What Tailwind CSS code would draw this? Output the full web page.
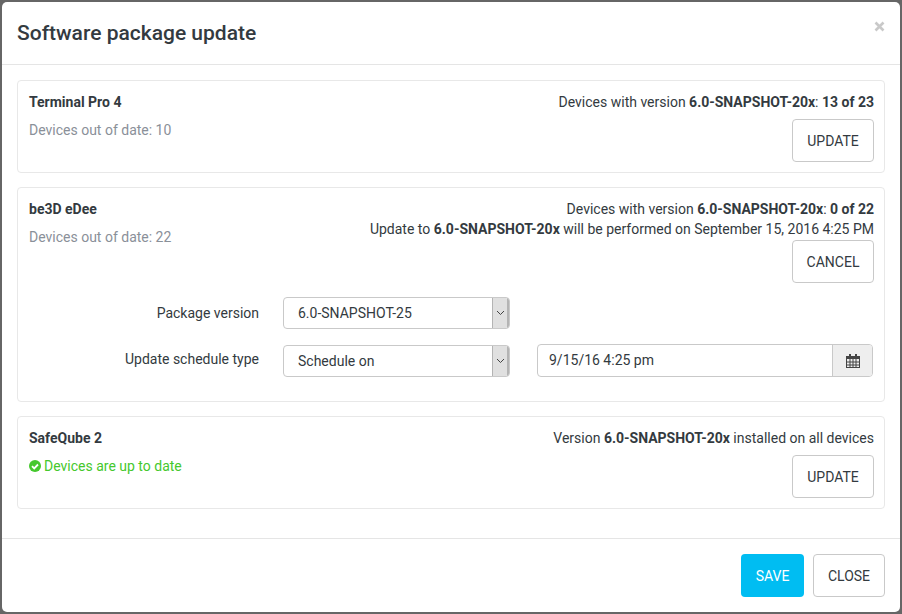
<!DOCTYPE html>
<html lang="en">
<head>
  <meta charset="UTF-8" />
  <title>Software package update</title>
  <script src="https://cdn.jsdelivr.net/npm/@tailwindcss/browser@4"></script>
</head>
<body class="w-[902px] h-[614px] overflow-hidden bg-[#666666] font-['Roboto',sans-serif] text-[14px] leading-[20px] text-[#333a40]">

  <!-- Modal -->
  <div class="relative ml-[2px] mt-[2px] w-[898px] h-[610px] bg-white rounded-[5px] flex flex-col">

    <!-- Header -->
    <div class="h-[62px] shrink-0 border-b border-[#e5e5e5] pl-[15px] pr-[15px] flex justify-between box-content">
      <h4 class="text-[21px] leading-[28px] font-medium mt-[17px]">Software package update</h4>
      <svg class="mt-[19px]" width="11" height="11" viewBox="0 0 11 11"><path d="M1.500 1.500l8 8M9.500 1.500l-8 8" stroke="#c9c9c9" stroke-width="2.600"/></svg>
    </div>

    <!-- Body -->
    <div class="flex-1 pl-[15px] pr-[15px] pt-[15px] flex flex-col gap-[14px]">

      <div class="h-[93px] border border-[#e8e8e8] rounded-[4px] pl-[11px] pr-[10px] pt-[11px] flex justify-between">
        <div>
          <div class="font-bold">Terminal Pro 4</div>
          <div class="mt-[8px] text-[#8a9099]">Devices out of date: 10</div>
        </div>
        <div class="flex flex-col items-end">
          <div>Devices with version <b>6.0-SNAPSHOT-20x</b>: <b>13 of 23</b></div>
          <button class="mt-[7px] w-[82px] h-[43px] border border-[#c9c9c9] rounded-[4px] bg-white">UPDATE</button>
        </div>
      </div>

      <div class="h-[215px] border border-[#e8e8e8] rounded-[4px] pl-[11px] pr-[10px] pt-[11px]">
        <div class="flex justify-between">
          <div>
            <div class="font-bold">be3D eDee</div>
            <div class="mt-[8px] text-[#8a9099]">Devices out of date: 22</div>
          </div>
          <div class="flex flex-col items-end">
            <div>Devices with version <b>6.0-SNAPSHOT-20x</b>: <b>0 of 22</b></div>
            <div>Update to <b>6.0-SNAPSHOT-20x</b> will be performed on September 15, 2016 4:25 PM</div>
            <button class="mt-[1px] w-[82px] h-[43px] border border-[#c9c9c9] rounded-[4px] bg-white">CANCEL</button>
          </div>
        </div>

        <div class="mt-[14px] flex items-center">
          <div class="w-[230px] text-right">Package version</div>
          <div class="ml-[24px] w-[227px] h-[32px] border border-[#c9c9c9] rounded-[4px] flex justify-between overflow-hidden">
            <span class="pl-[14px] pt-[5px]">6.0-SNAPSHOT-25</span>
            <span class="w-[17px] bg-[#e0e0e0] border-l border-r-2 border-[#b4b4b4] flex items-center justify-center">
              <svg width="9" height="6" viewBox="0 0 9 6"><path d="M1 1l3.500 3.500L8 1" fill="none" stroke="#444" stroke-width="1"/></svg>
            </span>
          </div>
        </div>

        <div class="mt-[15px] flex items-center">
          <div class="w-[230px] text-right mb-[3px]">Update schedule type</div>
          <div class="ml-[24px] w-[227px] h-[32px] border border-[#c9c9c9] rounded-[4px] flex justify-between overflow-hidden">
            <span class="pl-[14px] pt-[5px]">Schedule on</span>
            <span class="w-[17px] bg-[#e0e0e0] border-l border-r-2 border-[#b4b4b4] flex items-center justify-center">
              <svg width="9" height="6" viewBox="0 0 9 6"><path d="M1 1l3.500 3.500L8 1" fill="none" stroke="#444" stroke-width="1"/></svg>
            </span>
          </div>
          <div class="ml-[27px] w-[336px] h-[33px] border border-[#c9c9c9] rounded-[4px] flex justify-between overflow-hidden">
            <span class="pl-[11px] pt-[5px]">9/15/16 4:25 pm</span>
            <span class="w-[40px] bg-[#eeeeee] border-l border-[#c9c9c9] flex items-center justify-center">
              <svg width="14" height="14" viewBox="0 0 14 14" fill="#444"><path d="M3 0h2v2h4V0h2v2h3v12H0V2h3zM1 5v8h12V5z"/><path d="M1 7.500h12v1H1zM1 10.500h12v1H1zM3.500 5h1v8h-1zM6.500 5h1v8h-1zM9.500 5h1v8h-1z"/></svg>
            </span>
          </div>
        </div>
      </div>

      <div class="h-[93px] border border-[#e8e8e8] rounded-[4px] pl-[11px] pr-[10px] pt-[11px] flex justify-between">
        <div>
          <div class="font-bold">SafeQube 2</div>
          <div class="mt-[8px] text-[#45c82d] flex items-center gap-[3px]">
            <svg width="12" height="12" viewBox="0 0 12 12"><circle cx="6" cy="6" r="6" fill="#45c82d"/><path d="M3 6.200l2.200 2.200L9 4.500" fill="none" stroke="#fff" stroke-width="1.800"/></svg>
            Devices are up to date
          </div>
        </div>
        <div class="flex flex-col items-end">
          <div>Version <b>6.0-SNAPSHOT-20x</b> installed on all devices</div>
          <button class="mt-[7px] w-[82px] h-[43px] border border-[#c9c9c9] rounded-[4px] bg-white">UPDATE</button>
        </div>
      </div>
    </div>

    <!-- Footer -->
    <div class="h-[74px] shrink-0 border-t border-[#e5e5e5] pr-[15px] pt-[15px] flex justify-end gap-[9px]">
      <button class="w-[63px] h-[43px] rounded-[4px] bg-[#00bdf2] text-white">SAVE</button>
      <button class="w-[72px] h-[43px] border border-[#c9c9c9] rounded-[4px] bg-white">CLOSE</button>
    </div>
  </div>
</body>
</html>
